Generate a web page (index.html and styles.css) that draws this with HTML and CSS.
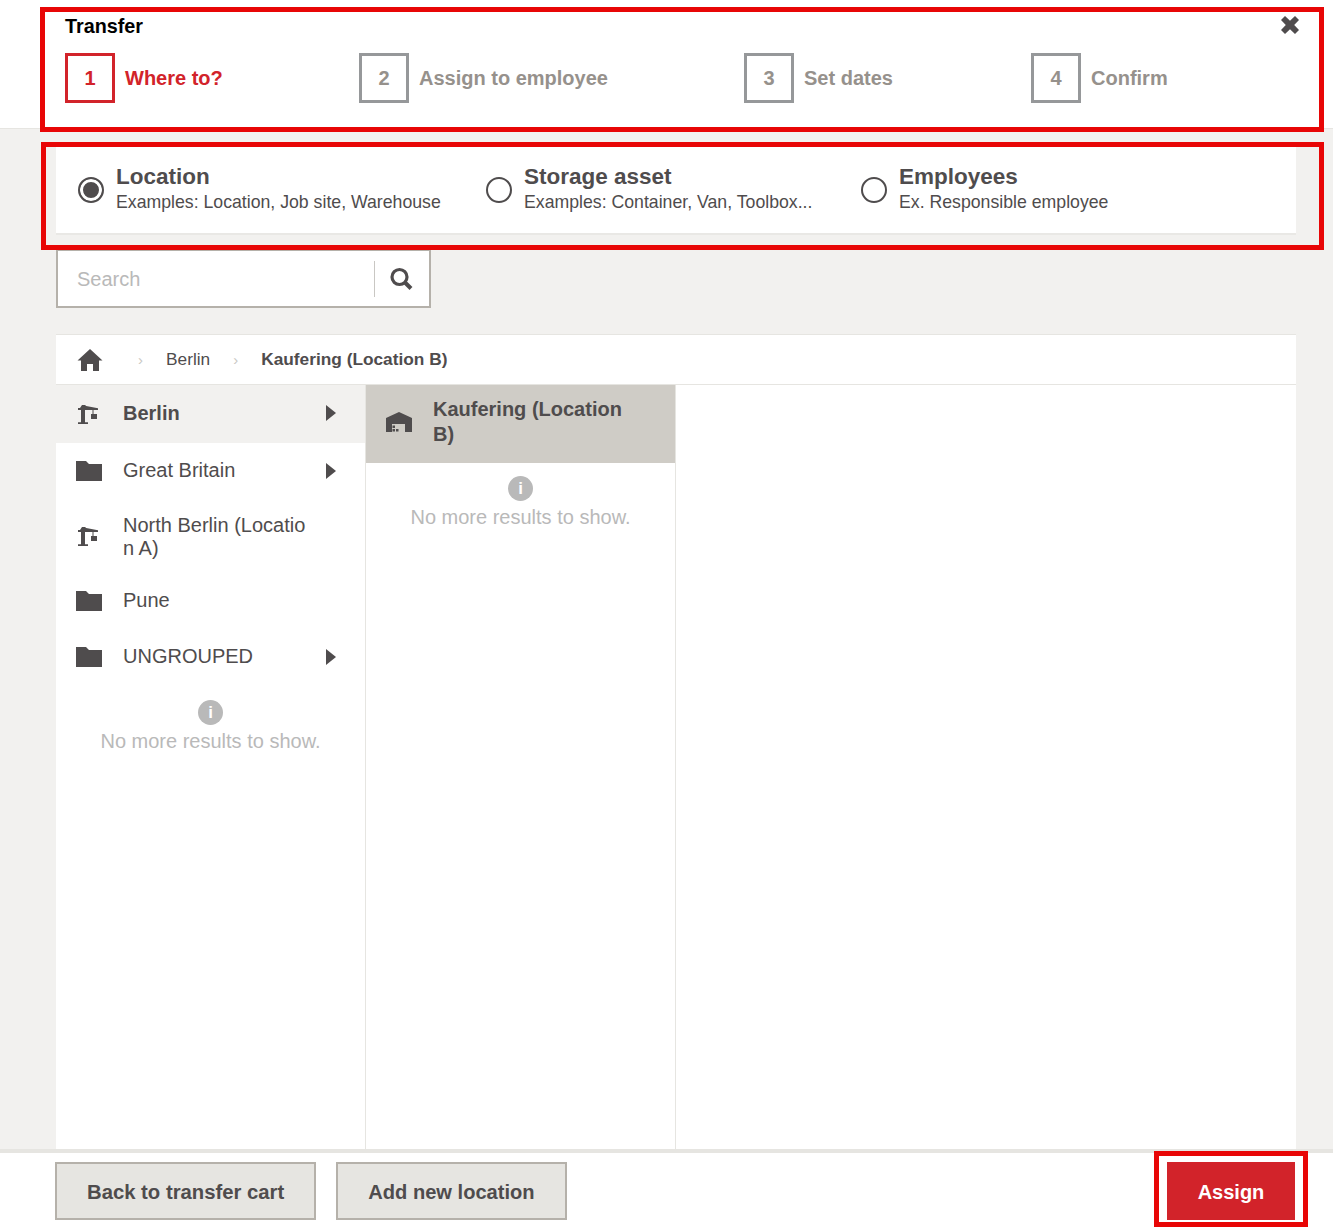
FILE: index.html
```html
<!DOCTYPE html>
<html lang="en">
<head>
    <meta charset="UTF-8">
    <meta name="viewport" content="width=device-width, initial-scale=1.0">
    <title>Transfer</title>
    <link rel="stylesheet" href="styles.css">
</head>
<body>

    <svg class="icon-defs" width="0" height="0">
        <defs>
            <symbol id="crane" viewBox="0 0 20 20">
                <path d="M3 6h4v12.200h3V20H0v-1.800h3z"/>
                <path d="M0 4h2l2-3h3l1.200 1L20 4.200V6H0z"/>
                <path d="M14.500 6h1v4h-1z"/>
                <path d="M13 10h6v5h-6z"/>
            </symbol>
            <symbol id="folder" viewBox="0 0 26 20">
                <path d="M0 0h10l3 3h13v17H0z"/>
            </symbol>
        </defs>
    </svg>

    <header class="top">
        <h1 class="title">Transfer</h1>
        <button class="close" aria-label="Close">
            <svg width="18" height="18" viewBox="0 0 18 18"><path d="M4 0 9 4.800 14 0l4 4-4.800 5 4.800 5-4 4-5-4.800L4 18l-4-4 4.800-5L0 4z"/></svg>
        </button>
        <ol class="steps">
            <li class="step step-1 active"><span class="step-num">1</span>Where to?</li>
            <li class="step step-2"><span class="step-num">2</span>Assign to employee</li>
            <li class="step step-3"><span class="step-num">3</span>Set dates</li>
            <li class="step step-4"><span class="step-num">4</span>Confirm</li>
        </ol>
    </header>

    <main class="content">
        <section class="options">
            <label class="option option-location">
                <span class="radio checked"></span>
                <span class="option-text"><b>Location</b><small>Examples: Location, Job site, Warehouse</small></span>
            </label>
            <label class="option option-storage">
                <span class="radio"></span>
                <span class="option-text"><b>Storage asset</b><small>Examples: Container, Van, Toolbox...</small></span>
            </label>
            <label class="option option-employees">
                <span class="radio"></span>
                <span class="option-text"><b>Employees</b><small>Ex. Responsible employee</small></span>
            </label>
        </section>

        <div class="search">
            <span class="search-input">Search</span>
            <span class="search-btn">
                <svg width="26" height="26" viewBox="0 0 26 26" fill="none" stroke="#4f4c4d"><circle cx="11.500" cy="11" r="7.500" stroke-width="3.200"/><path d="m17 16.500 6 6" stroke-width="4"/></svg>
            </span>
        </div>

        <section class="browser">
            <nav class="crumbs">
                <svg class="home" width="26" height="22" viewBox="0 0 26 22" fill="#4f4c4d"><path d="M13 0 25.500 11.500H22V22h-6v-7h-6v7H4V11.500H.5z"/></svg>
                <span class="sep sep-first">›</span>
                <span class="crumb">Berlin</span>
                <span class="sep">›</span>
                <span class="crumb current">Kaufering (Location B)</span>
            </nav>
            <div class="columns">
                <div class="column column-list">
                    <div class="row row-open">
                        <svg class="row-icon crane"><use href="#crane"/></svg>
                        <span class="row-label">Berlin</span>
                        <span class="arrow arrow-up"></span>
                    </div>
                    <div class="row">
                        <svg class="row-icon folder"><use href="#folder"/></svg>
                        <span class="row-label">Great Britain</span>
                        <span class="arrow"></span>
                    </div>
                    <div class="row row-tall">
                        <svg class="row-icon crane"><use href="#crane"/></svg>
                        <span class="row-label">North Berlin (Locatio<br>n A)</span>
                    </div>
                    <div class="row">
                        <svg class="row-icon folder"><use href="#folder"/></svg>
                        <span class="row-label">Pune</span>
                    </div>
                    <div class="row">
                        <svg class="row-icon folder"><use href="#folder"/></svg>
                        <span class="row-label">UNGROUPED</span>
                        <span class="arrow"></span>
                    </div>
                    <div class="no-more">
                        <span class="info">i</span>
                        <p>No more results to show.</p>
                    </div>
                </div>
                <div class="column">
                    <div class="row row-selected">
                        <svg class="row-icon warehouse" viewBox="0 0 26 20"><path fill-rule="evenodd" d="M13 0 26 6v14H0V6zM6 12v8h13v-8z"/><path d="M6.500 13.500h2.500V16H6.500zM6.500 17h2.500v2.500H6.500zM10 17h2.500v2.500H10z"/></svg>
                        <span class="row-label">Kaufering (Location B)</span>
                    </div>
                    <div class="no-more">
                        <span class="info">i</span>
                        <p>No more results to show.</p>
                    </div>
                </div>
                <div class="column column-empty"></div>
            </div>
        </section>
    </main>

    <footer class="bottom">
        <button class="btn">Back to transfer cart</button>
        <button class="btn btn-add">Add new location</button>
        <button class="btn btn-primary">Assign</button>
    </footer>

    <!-- red marks drawn over the page -->
    <div class="mark mark-header"></div>
    <div class="mark mark-options"></div>
    <div class="mark mark-assign"></div>

</body>
</html>
```

FILE: styles.css
```css
* {
    box-sizing: border-box;
}

html, body {
    height: 100%;
}

body {
    margin: 0;
    height: 1227px;
    overflow: hidden;
    position: relative;
    display: flex;
    flex-direction: column;
    font-family: "Liberation Sans", Arial, sans-serif;
    color: #4f4c4d;
    background-color: #f2f1ef;
}

.icon-defs {
    position: absolute;
}

/* header with steps */
.top {
    position: relative;
    height: 129px;
    flex: none;
    padding: 14px 65px 0;
    background-color: #fff;
    border-bottom: 1px solid #e6e5e1;
}

.title {
    margin: 0;
    font-size: 19.800px;
    line-height: 24px;
    font-weight: bold;
    color: #000;
}

.close {
    position: absolute;
    top: 16px;
    right: 34px;
    padding: 0;
    border: none;
    background: none;
    line-height: 0;
    fill: #4f4c4d;
}

.steps {
    display: flex;
    margin: 15px 0 0;
    padding: 0;
    list-style: none;
}

.step {
    display: flex;
    align-items: center;
    gap: 10px;
    font-size: 20px;
    font-weight: bold;
    color: #96918c;
}

.step-1 { width: 294px; }
.step-2 { width: 385px; }
.step-3 { width: 287px; }

.step-num {
    width: 50px;
    height: 50px;
    display: flex;
    align-items: center;
    justify-content: center;
    border: 3px solid #96989a;
    font-weight: bold;
}

.step.active {
    color: #d2232a;
}

.step.active .step-num {
    border-color: #d2232a;
}

/* main area */
.content {
    flex: 1;
    min-height: 0;
    display: flex;
    flex-direction: column;
    padding: 18px 37px 0 56px;
}

.options {
    height: 88px;
    flex: none;
    display: flex;
    background-color: #fff;
    border-bottom: 2px solid #e9e8e5;
}

.option {
    display: flex;
    align-items: center;
    gap: 12px;
    padding-bottom: 3px;
}

.option-location { width: 409px; padding-left: 22px; }
.option-storage { width: 375px; padding-left: 21px; }
.option-employees { padding-left: 21px; }

.radio {
    width: 26px;
    height: 26px;
    flex: none;
    margin-top: 3px;
    border: 2px solid #4f4c4d;
    border-radius: 50%;
    background-color: #fff;
}

.radio.checked {
    background-color: #4f4c4d;
    box-shadow: inset 0 0 0 3px #fff;
}

.option-text b {
    display: block;
    font-size: 22.500px;
    line-height: 27px;
}

.option-text small {
    display: block;
    font-size: 17.700px;
    line-height: 24px;
}

.search {
    width: 375px;
    height: 58px;
    flex: none;
    margin-top: 15px;
    display: flex;
    align-items: center;
    background-color: #fff;
    border: 2px solid #b5b1aa;
    border-top-width: 1px;
}

.search-input {
    flex: 1;
    padding: 2px 0 0 19px;
    font-size: 20px;
    color: #b9b9b9;
}

.search-btn {
    width: 55px;
    height: 36px;
    padding-left: 13px;
    border-left: 1px solid #c9c7c3;
    line-height: 0;
    display: flex;
    align-items: center;
}

.browser {
    flex: 1;
    min-height: 0;
    margin-top: 26px;
    display: flex;
    flex-direction: column;
    background-color: #fff;
    border-top: 1px solid #e6e5e1;
}

.crumbs {
    height: 50px;
    flex: none;
    display: flex;
    align-items: center;
    padding-left: 22px;
    font-size: 17.300px;
    border-bottom: 1px solid #e6e5e1;
}

.home {
    margin-left: -1px;
}

.sep {
    width: 51px;
    text-align: center;
    font-size: 15px;
    color: #c9c7c3;
}

.sep-first {
    width: 63px;
    padding-left: 12px;
}

.current {
    font-weight: bold;
}

.columns {
    flex: 1;
    min-height: 0;
    display: flex;
}

.column {
    width: 310px;
    flex: none;
    border-right: 1px solid #e6e5e1;
}

.column-empty {
    flex: 1;
    border-right: none;
}

.row {
    display: flex;
    align-items: center;
    min-height: 56px;
    padding: 0 29px 0 20px;
    font-size: 20px;
    line-height: 24px;
}

.row-icon {
    width: 26px;
    height: 24px;
    flex: none;
    margin-right: 21px;
    fill: #4f4c4d;
}

.folder {
    height: 20px;
}

.crane {
    width: 20px;
    height: 20px;
    margin: 0 25px 0 2px;
}

.row-label {
    flex: 1;
    padding-bottom: 2px;
}

.row-open {
    height: 58px;
    font-weight: bold;
    background-color: #f2f1ef;
}

.row-tall {
    height: 74px;
}

.row-tall .row-label {
    padding: 2px 0 0;
    line-height: 23px;
}

.row-selected {
    height: 78px;
    padding-right: 30px;
    font-weight: bold;
    background-color: #cfccc6;
}

.row-selected .row-label {
    padding-bottom: 4px;
    line-height: 25px;
}

.warehouse {
    height: 20px;
    margin-bottom: 4px;
}

.arrow {
    width: 0;
    height: 0;
    border-left: 10px solid #4f4c4d;
    border-top: 8px solid transparent;
    border-bottom: 8px solid transparent;
}

.arrow-up {
    margin-bottom: 3px;
}

.no-more {
    padding-top: 13px;
    text-align: center;
    font-size: 20px;
    color: #b9b9b9;
}

.column-list .no-more {
    padding-top: 15px;
}

.no-more p {
    margin: 4px 0 0;
    line-height: 24px;
}

.info {
    width: 25px;
    height: 25px;
    margin: 0 auto;
    display: block;
    border-radius: 50%;
    background-color: #b9b9b9;
    color: #fff;
    font-size: 17px;
    font-weight: bold;
    line-height: 25px;
}

/* footer buttons */
.bottom {
    height: 78px;
    flex: none;
    display: flex;
    align-items: flex-start;
    gap: 20px;
    padding: 9px 38px 0 55px;
    background-color: #fff;
    border-top: 4px solid #e6e5e1;
}

.btn {
    height: 58px;
    padding: 2px 30px 0;
    font-family: inherit;
    font-size: 20.300px;
    font-weight: bold;
    color: #4f4c4d;
    background-color: #e6e5e1;
    border: 2px solid #b5b1aa;
}

.btn-add {
    font-size: 20.100px;
}

.btn-primary {
    width: 128px;
    margin-left: auto;
    padding: 2px 0 0;
    font-size: 20px;
    color: #fff;
    background-color: #d2232a;
    border: none;
}

/* red marks */
.mark {
    position: absolute;
    border: 5px solid #e80606;
    pointer-events: none;
}

.mark-header {
    left: 40px;
    top: 7px;
    width: 1284px;
    height: 125px;
}

.mark-options {
    left: 41px;
    top: 142px;
    width: 1283px;
    height: 108px;
}

.mark-assign {
    left: 1154px;
    top: 1151px;
    width: 154px;
    height: 76px;
}
```
